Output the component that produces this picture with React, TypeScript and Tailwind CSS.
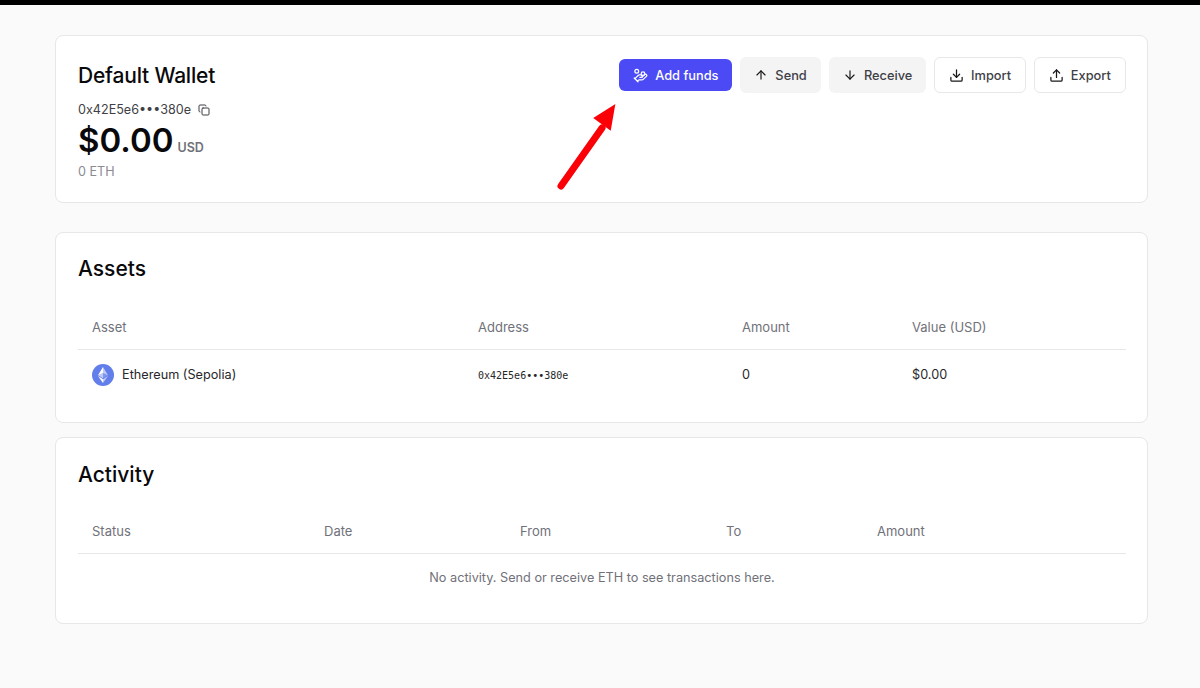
import React from "react";
import { ArrowDown, ArrowUp, Copy, Download, HandCoins, Upload } from "lucide-react";

const ActionButton = ({ icon, label, className }: { icon: React.ReactNode; label: string; className: string }) => (
  <button className={`flex items-center justify-center gap-[7px] rounded-md text-[12.8px] font-medium ${className}`}>
    {icon}
    <span className="pt-[1px]">{label}</span>
  </button>
);

const Header = ({ cols, labels }: { cols: string; labels: string[] }) => (
  <div className={`grid ${cols} h-[44px] items-center border-b border-[#e7e7e9] text-[13px] text-[#71717a]`}>
    {labels.map((label) => (
      <div key={label} className="pl-[14px]">
        {label}
      </div>
    ))}
  </div>
);

const App = () => {
  return (
    <div className="relative h-[688px] overflow-hidden bg-[#fafafa] font-['Inter',sans-serif] text-[#09090b]">
      <div className="h-[5px] bg-black" />
      <main className="flex flex-col pt-[30px] pr-[52px] pl-[55px]">
        <section className="flex h-[168px] justify-between rounded-lg border border-[#e7e7e9] bg-white pt-[21px] pr-[21px] pl-[22px]">
          <div>
            <h2 className="pt-[1px] text-[21px] leading-[36px] font-medium tracking-[-0.2px]">Default Wallet</h2>
            <div className="mt-[7px] flex items-center gap-[7px] text-[12.6px] leading-[18px] text-[#3f3f46]">
              <span>0x42E5e6•••380e</span>
              <Copy size={12} />
            </div>
            <div className="flex items-baseline gap-[4px]">
              <span className="text-[33px] leading-[42px] font-semibold">$0.00</span>
              <span className="text-[12.5px] font-semibold text-[#71717a]">USD</span>
            </div>
            <div className="mt-[2px] text-[12.6px] leading-[18px] text-[#8a8a93]">0 ETH</div>
          </div>
          <div className="flex h-[36px] items-center gap-[7.5px]">
            <ActionButton className="h-[32px] w-[113px] bg-[#4b4af5] text-white" label="Add funds" icon={<HandCoins size={15} />} />
            <ActionButton className="h-[36px] w-[81.5px] bg-[#f4f4f5] text-[#3f3f46]" label="Send" icon={<ArrowUp size={14} className="text-[#18181b]" />} />
            <ActionButton className="h-[36px] w-[97.6px] bg-[#f4f4f5] text-[#3f3f46]" label="Receive" icon={<ArrowDown size={14} className="text-[#18181b]" />} />
            <ActionButton className="h-[36px] w-[92.3px] border border-[#e7e7e9] bg-white text-[#3f3f46]" label="Import" icon={<Download size={15} className="text-[#18181b]" />} />
            <ActionButton className="h-[36px] w-[92.3px] border border-[#e7e7e9] bg-white text-[#3f3f46]" label="Export" icon={<Upload size={15} className="text-[#18181b]" />} />
          </div>
        </section>

        <section className="mt-[29px] h-[191px] rounded-lg border border-[#e7e7e9] bg-white pt-[18px] pr-[21px] pl-[22px]">
          <h2 className="text-[21px] leading-[36px] font-medium">Assets</h2>
          <div className="mt-[19px]">
            <Header cols="grid-cols-[386px_264px_170px_1fr]" labels={["Asset", "Address", "Amount", "Value (USD)"]} />
            <div className="grid h-[50px] grid-cols-[386px_264px_170px_1fr] items-center text-[12.7px] text-[#27272a]">
              <div className="flex items-center gap-[8px] pl-[14px]">
                <svg width="22" height="22" viewBox="0 0 22 22">
                  <circle cx="11" cy="11" r="11" fill="#627eea" />
                  <path d="M11 3v6l5 2.3z" fill="#fff" fillOpacity=".6" />
                  <path d="M11 3L6 11.3 11 9z" fill="#fff" />
                  <path d="M11 9v5.2l5-2.9z" fill="#fff" fillOpacity=".2" />
                  <path d="M6 11.3l5 2.9V9z" fill="#fff" fillOpacity=".6" />
                  <path d="M11 15.2V19l5-6.9z" fill="#fff" fillOpacity=".6" />
                  <path d="M11 19v-3.8l-5-3.1z" fill="#fff" />
                </svg>
                <span>Ethereum (Sepolia)</span>
              </div>
              <div className="pl-[14px] font-['DejaVu_Sans_Mono',monospace] text-[10px]">0x42E5e6•••380e</div>
              <div className="pl-[14px]">0</div>
              <div className="pl-[14px]">$0.00</div>
            </div>
          </div>
        </section>

        <section className="mt-[14px] h-[187px] rounded-lg border border-[#e7e7e9] bg-white pt-[19px] pr-[21px] pl-[22px]">
          <h2 className="text-[21px] leading-[36px] font-medium">Activity</h2>
          <div className="mt-[17px]">
            <Header cols="grid-cols-[232px_196px_206px_151px_1fr]" labels={["Status", "Date", "From", "To", "Amount"]} />
            <div className="flex h-[47px] items-center justify-center text-[12.7px] text-[#71717a]">
              No activity. Send or receive ETH to see transactions here.
            </div>
          </div>
        </section>
      </main>

      <svg className="absolute top-[100px] left-[550px]" width="72" height="96" viewBox="0 0 72 96">
        <path d="M11 86L52 28" stroke="#fb0007" strokeWidth="7" strokeLinecap="round" />
        <path d="M64 6L45 18 60 29z" fill="#fb0007" stroke="#fb0007" strokeWidth="2" />
      </svg>
    </div>
  );
};

export default App;
